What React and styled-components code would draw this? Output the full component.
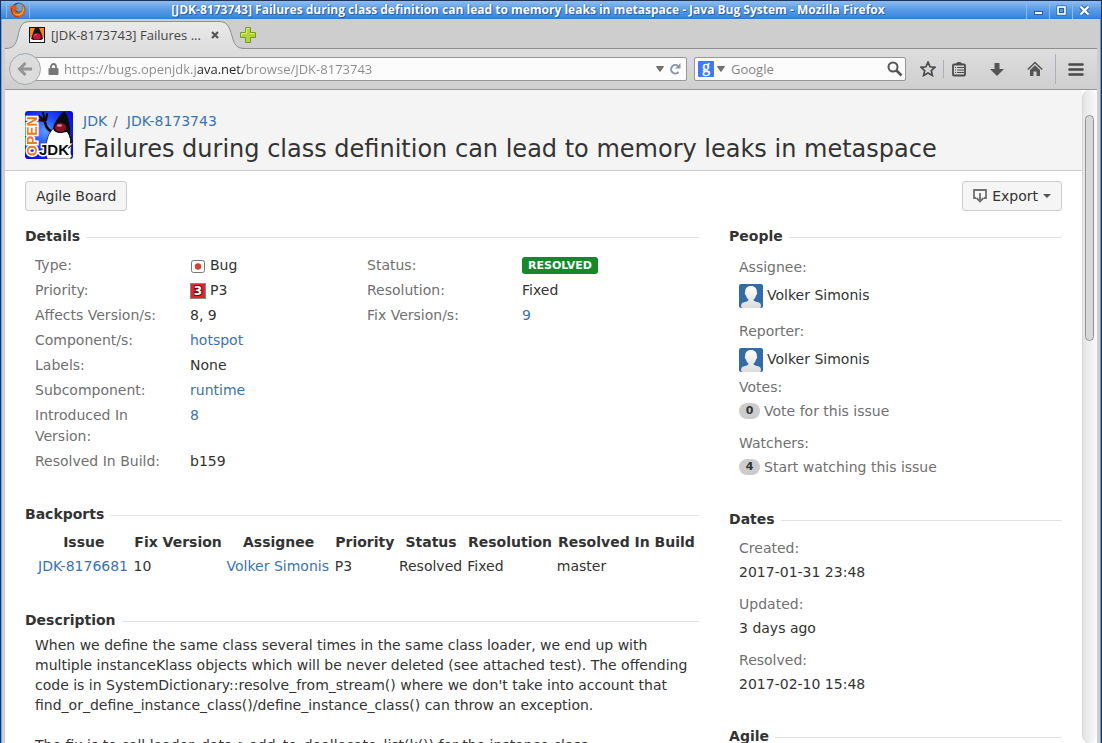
import React from "react";
import styled, { createGlobalStyle } from "styled-components";

const Global = createGlobalStyle`
  *, *::before, *::after { box-sizing: border-box; }
  body { margin: 0; background: #ffffff; }
  h1, h2, p, dl, dd, dt, ul { margin: 0; padding: 0; }
  button, input { font: inherit; }
`;

const chromeFont = `"Open Sans", "Noto Sans", sans-serif`;

const Window = styled.div`
  display: flex;
  flex-direction: column;
  height: 100vh;
  overflow: hidden;
  border-left: 1px solid #1b3358;
  border-right: 1px solid #1b3358;
  font-family: "DejaVu Sans", sans-serif;
  font-size: 14px;
  line-height: 20px;
  color: #333333;
`;

const TitleBar = styled.header`
  flex: none;
  display: flex;
  align-items: center;
  height: 19px;
  padding: 0 6px 0 5px;
  border-top: 1px solid #1b3358;
  background: linear-gradient(#8fbdf0, #5c9de8 45%, #3b88df 90%, #3478ca);
`;

const WindowTitle = styled.div`
  flex: 1;
  text-align: center;
  white-space: nowrap;
  overflow: hidden;
  font: bold 12px/18px ${chromeFont};
  color: #ffffff;
  text-shadow: 1px 1px 0 #2c5f9f, 0 0 1px #2c5f9f;
`;

const TitleIcon = styled.div`
  display: flex;
  padding: 0 3px;
  border-left: 1px solid #88b9ef;
  border-right: 1px solid #88b9ef;
`;

const TitleButton = styled.button`
  display: flex;
  align-items: center;
  justify-content: center;
  width: 23px;
  height: 18px;
  padding: 0;
  border: 0;
  border-left: 1px solid #88b9ef;
  background: none;
`;

const Frame = styled.div`
  flex: 1;
  min-height: 0;
  display: flex;
  flex-direction: column;
  border-left: 1px solid #6ba9ee;
  border-right: 1px solid #4f9af0;
  padding: 0 3px;
  background: #cecece;
`;

const TabStrip = styled.div`
  flex: none;
  display: flex;
  align-items: flex-end;
  height: 30px;
  border-bottom: 1px solid #8f8f8f;
`;

const Tab = styled.div`
  position: relative;
  display: flex;
  align-items: center;
  gap: 6px;
  width: 235px;
  height: 29px;
  margin-bottom: -1px;
  padding: 0 19px 0 24px;
  font: 13px/20px ${chromeFont};
  color: #444444;
  & > * { position: relative; }
`;

const TabShape = styled.svg`
  && { position: absolute; }
  left: 0;
  bottom: 0;
`;

const TabLabel = styled.span`
  flex: 1;
  white-space: nowrap;
`;

const IconButton = styled.button`
  display: flex;
  align-items: center;
  justify-content: center;
  flex: none;
  width: ${(p) => p.$w || 16}px;
  height: 16px;
  padding: 0;
  border: 0;
  background: none;
`;

const NewTab = styled(IconButton)`
  margin-bottom: 5px;
`;

const NavBar = styled.nav`
  flex: none;
  display: flex;
  align-items: center;
  height: 41px;
  padding: 0 13px 0 4px;
  border-bottom: 1px solid #969696;
  background: linear-gradient(#dedede, #cfcfcf);
  font: 13px/20px ${chromeFont};
`;

const BackButton = styled.button`
  position: relative;
  z-index: 1;
  display: flex;
  align-items: center;
  justify-content: center;
  flex: none;
  width: 32px;
  height: 32px;
  padding: 0;
  border: 1px solid #a3aab0;
  border-radius: 50%;
  background: #dcdcdc;
`;

const Field = styled.div`
  display: flex;
  align-items: center;
  gap: 3px;
  height: 24px;
  border: 1px solid #979797;
  border-radius: 2px;
  background: #fcfcfc;
`;

const UrlField = styled(Field)`
  flex: 1;
  min-width: 0;
  margin-left: -8px;
  padding: 0 3px 0 11px;
`;

const SearchField = styled(Field)`
  flex: none;
  width: 212px;
  margin-left: 7px;
  padding: 0 2px 0 3px;
`;

const UrlInput = styled.input`
  flex: 1;
  min-width: 0;
  height: 20px;
  padding: 0;
  border: 0;
  outline: 0;
  color: transparent;
  background: linear-gradient(to right, #8a8a8a 132px, #222222 132px, #222222 179px, #8a8a8a 179px);
  background-clip: text;
  -webkit-background-clip: text;
`;

const SearchInput = styled.input`
  flex: 1;
  min-width: 0;
  height: 20px;
  padding: 0 0 0 3px;
  border: 0;
  outline: 0;
  background: none;
  &::placeholder { color: #858585; opacity: 1; }
`;

const Tools = styled.div`
  display: flex;
  align-items: center;
  gap: 12px;
  margin-left: 14px;
`;

const BookmarkTools = styled.div`
  display: flex;
  align-items: center;
  gap: 7px;
`;

const Divider = styled.span`
  width: 1px;
  height: ${(p) => p.$h}px;
  background: #a8b0b8;
`;

const Viewport = styled.div`
  flex: 1;
  min-height: 0;
  display: flex;
  background: #ffffff;
`;

const Page = styled.main`
  flex: 1;
  min-width: 0;
  overflow: hidden;
`;

const ScrollTrack = styled.div`
  flex: none;
  width: 15px;
  padding: 25px 2px 0;
  border-left: 1px solid #d8d8d8;
  border-radius: 8px;
  background: linear-gradient(to right, #e4e4e4, #fafafa);
`;

const ScrollThumb = styled.div`
  width: 9px;
  height: 36%;
  border: 1px solid #949494;
  border-radius: 5px;
  background: #d8d8d8;
`;

const IssueHeader = styled.header`
  display: flex;
  gap: 10px;
  padding: 21px 20px 6px;
  border-bottom: 1px solid #cccccc;
  background: #f4f4f4;
`;

const Crumbs = styled.div`
  display: flex;
  gap: 6px;
  color: #707070;
`;

const Link = styled.a`
  color: #3b73af;
  text-decoration: none;
`;

const CrumbKey = styled(Link)`
  margin-left: 3px;
`;

const IssueTitle = styled.h1`
  font-size: 24px;
  font-weight: normal;
  line-height: 30px;
  padding-top: 3px;
  white-space: nowrap;
`;

const ActionBar = styled.div`
  display: flex;
  justify-content: space-between;
  padding: 10px 20px 15px;
`;

const ActionButton = styled.button`
  display: flex;
  align-items: center;
  gap: 5px;
  height: 30px;
  padding: 0 10px;
  border: 1px solid #cccccc;
  border-radius: 3px;
  background: #f5f5f5;
  color: #333333;
`;

const Columns = styled.div`
  display: grid;
  grid-template-columns: 65% minmax(0, 1fr);
  column-gap: 30px;
  padding: 0 20px;
`;

const Column = styled.div`
  display: flex;
  flex-direction: column;
  gap: ${(p) => p.$gap}px;
`;

const SectionTitle = styled.h2`
  display: flex;
  align-items: center;
  gap: 6px;
  font-size: 14px;
  font-weight: bold;
  line-height: 20px;
  &::after {
    content: "";
    flex: 1;
    height: 1px;
    margin-top: 2px;
    background: #e2e2e2;
  }
`;

const SectionBody = styled.div`
  padding: ${(p) => p.$top || 5}px 0 0 10px;
`;

const DetailGrid = styled.div`
  display: grid;
  grid-template-columns: 1fr 1fr;
  align-items: start;
  line-height: 21px;
`;

const DetailRow = styled.div`
  display: grid;
  grid-template-columns: 140px 1fr;
  column-gap: 15px;
  padding-bottom: 4px;
  &:last-child { padding-bottom: 1px; }
`;

const Term = styled.dt`
  color: #707070;
`;

const IconValue = styled.span`
  display: flex;
  align-items: center;
  gap: 4px;
`;

const Lozenge = styled.span`
  display: inline-block;
  padding: 0 6px;
  border-radius: 3px;
  background: #14892c;
  color: #ffffff;
  font-size: 11px;
  font-weight: bold;
  line-height: 17px;
  vertical-align: top;
  margin-top: 2px;
`;

const BackportTable = styled.table`
  border-spacing: 2px;
  width: 100%;
  white-space: nowrap;
  th, td { padding: 1px; }
  td { text-align: left; }
`;

const Paragraph = styled.p`
  margin-bottom: 20px;
`;

const Item = styled.div`
  margin-bottom: ${(p) => (p.$tight ? 4 : 12)}px;
  &:last-child { margin-bottom: 0; }
`;

const ItemValue = styled.dd`
  display: flex;
  align-items: center;
  gap: 4px;
  margin-top: 4px;
`;

const UserValue = styled(ItemValue)`
  align-items: flex-start;
  height: 28px;
  & > svg { margin-top: 3px; flex: none; }
  & > span { line-height: 28px; }
`;

const Badge = styled.span`
  width: 21px;
  border-radius: 8px;
  background: #cccccc;
  font-size: 11px;
  font-weight: bold;
  line-height: 16px;
  text-align: center;
`;

const MutedLink = styled(Link)`
  color: #707070;
`;

const FirefoxLogo = () => (
  <svg width="16" height="16" viewBox="0 0 16 16">
    <circle cx="8.5" cy="7.5" r="7" fill="#2a5b9c" />
    <circle cx="9.5" cy="5.5" r="4" fill="#5ea9d8" />
    <path d="M1 2.500 L2 4.500 C3 3 5 2.500 7 3.500 C5 4.500 6 5.500 8 6 C7 8 5 7.500 5.500 9 C7 11.500 11 11 12 8 C13 6 12 3 11 1 C15 3 16.500 8 14.500 11.500 C12 16.500 4.500 17 1.500 12 C0 9 0 6 1 2.500Z" fill="#dd5a17" />
    <path d="M13 4 C15 8 13.500 12 9.500 13.500 C5.500 14 3 12 2 9 C4 13 11 14 13 8Z" fill="#f6b63a" />
    <path d="M1.500 6 C.8 11 4 15 8.500 15" fill="none" stroke="#a8321a" strokeWidth="1" />
  </svg>
);

const DukeFavicon = () => (
  <svg width="16" height="16" viewBox="0 0 16 16">
    <rect width="16" height="16" fill="#111" />
    <rect x="1" y="1" width="14" height="14" fill="#ef8b22" />
    <path d="M1 11 L4 9 L12 9 L15 11 V15 H1Z" fill="#fff" />
    <path d="M6 1 H10 L13 8 L14 12 L12 13 H4.500 L2 12 L4 6Z" fill="#151515" />
    <ellipse cx="8" cy="9.500" rx="4" ry="3.300" fill="#cf1136" />
    <path d="M5.500 8.500 C6 7.500 7 7.500 8 7.500" stroke="#ec8095" fill="none" />
  </svg>
);

const ProjectAvatar = () => (
  <svg width="48" height="48" viewBox="0 0 48 48" role="img" aria-label="OpenJDK">
    <defs>
      <radialGradient id="sky" cx="42%" cy="42%" r="65%">
        <stop offset="0" stopColor="#5f9dff" />
        <stop offset=".45" stopColor="#1f4dfa" />
        <stop offset="1" stopColor="#0909dc" />
      </radialGradient>
      <clipPath id="avatarClip"><rect width="48" height="48" rx="3" /></clipPath>
    </defs>
    <g clipPath="url(#avatarClip)">
      <rect width="48" height="48" fill="url(#sky)" />
      <path d="M29 17 C24 21 22 27 21 35 L22 48 H46 V40 C47 32 45 25 43 20Z" fill="#fff" stroke="#111" strokeWidth=".7" />
      <path d="M45 25 C48 30 46 34 43 37" fill="none" stroke="#111" strokeWidth="2" />
      <path d="M38 1 C35 4 31 9 29 14 C27 19 29 21 34 22 L42 21 L45 26 C46 17 44 6 40 1Z" fill="#0b0b0b" />
      <ellipse cx="35.500" cy="16.500" rx="6" ry="5" fill="#8d1227" stroke="#0b0b0b" />
      <ellipse cx="34.500" cy="14.500" rx="2.600" ry="1.300" fill="#d98894" />
      <path d="M20 11 C21 16 23 19 26 20" fill="none" stroke="#0b0b0b" strokeWidth="2.600" />
      <path d="M20 10 L14 5 M20 9 L18 2 M21 9 L22 3 M19 10 L14 9" fill="none" stroke="#0b0b0b" strokeWidth="2.200" strokeLinecap="round" />
      <text x="12" y="45" transform="rotate(-90 12 45)" fontFamily="Liberation Sans" fontWeight="bold" fontSize="14" fill="#ee7a12" stroke="#fff" strokeWidth="3" paintOrder="stroke">OPEN</text>
      <text x="14" y="44" fontFamily="Liberation Sans" fontWeight="bold" fontSize="15" fill="#0c0c0c" stroke="#fff" strokeWidth="3" paintOrder="stroke">JDK</text>
    </g>
  </svg>
);

const UserAvatar = () => (
  <svg width="24" height="24" viewBox="0 0 24 24">
    <defs>
      <linearGradient id="person" x1="0" y1="0" x2="0" y2="1">
        <stop offset="0" stopColor="#ffffff" />
        <stop offset="1" stopColor="#dcdcdc" />
      </linearGradient>
    </defs>
    <rect width="24" height="24" rx="2" fill="#326ca6" />
    <path d="M12 2 C8 2 6 4.500 6.200 8 C5.500 8.500 5.800 11 7 11.500 C7.500 13.500 8.500 15 9.500 15.500 C9.500 17 8 17.500 5 18.200 C3 18.800 2 20 2 22 Q2 24 3.500 24 H20.500 Q22 24 22 22 C22 20 21 18.800 19 18.200 C16 17.500 14.500 17 14.500 15.500 C15.500 15 16.500 13.500 17 11.500 C18.200 11 18.500 8.500 17.800 8 C18 4.500 16 2 12 2Z" fill="url(#person)" />
  </svg>
);

const Caret = () => (
  <svg width="8" height="6" viewBox="0 0 8 6"><path d="M.5 .5 H7.500 L4 5.500Z" fill="#777" stroke="#555" strokeWidth=".8" /></svg>
);

const people = "Volker Simonis";

const leftDetails = [
  ["Type:", <IconValue>
    <svg width="16" height="16" viewBox="0 0 16 16"><rect x="1.500" y="2.500" width="13" height="12" rx="2" fill="#fff" stroke="#777" /><circle cx="8" cy="8.500" r="3.200" fill="#d04437" /></svg>Bug</IconValue>],
  ["Priority:", <IconValue>
    <svg width="16" height="16" viewBox="0 0 16 16"><rect x=".5" y=".5" width="15" height="15" fill="#e6232a" stroke="#888" /><text x="8" y="12" textAnchor="middle" fontFamily="DejaVu Sans" fontWeight="bold" fontSize="12" fill="#fff" stroke="#5b1010" strokeWidth="2" paintOrder="stroke">3</text></svg>P3</IconValue>],
  ["Affects Version/s:", "8, 9"],
  ["Component/s:", <Link href="#hotspot">hotspot</Link>],
  ["Labels:", "None"],
  ["Subcomponent:", <Link href="#runtime">runtime</Link>],
  ["Introduced In Version:", <Link href="#v8">8</Link>],
  ["Resolved In Build:", "b159"],
];

const rightDetails = [
  ["Status:", <Lozenge>RESOLVED</Lozenge>],
  ["Resolution:", "Fixed"],
  ["Fix Version/s:", <Link href="#v9">9</Link>],
];

const dates = [
  ["Created:", "2017-01-31 23:48"],
  ["Updated:", "3 days ago"],
  ["Resolved:", "2017-02-10 15:48"],
];

const DetailList = ({ rows }) => (
  <dl>
    {rows.map(([label, value]) => (
      <DetailRow key={label}><Term>{label}</Term><dd>{value}</dd></DetailRow>
    ))}
  </dl>
);

const BrowserChrome = () => (
  <>
    <TabStrip>
      <Tab>
        <TabShape width="240" height="29" viewBox="0 0 240 29">
          <defs><linearGradient id="tab" x1="0" y1="0" x2="0" y2="1"><stop offset="0" stopColor="#eaeaea" /><stop offset="1" stopColor="#dedede" /></linearGradient></defs>
          <path d="M0 28.500 C9 28.500 11 24 13 16 C15 6 17 1.500 25 1.500 H214 C222 1.500 224 6 227 16 C229 24 231 28.500 240 28.500 V29 H0Z" fill="url(#tab)" />
          <path d="M0 28.500 C9 28.500 11 24 13 16 C15 6 17 1.500 25 1.500 H214 C222 1.500 224 6 227 16 C229 24 231 28.500 240 28.500" fill="none" stroke="#8f8f8f" />
        </TabShape>
        <DukeFavicon />
        <TabLabel>[JDK-8173743] Failures ...</TabLabel>
        <IconButton aria-label="Close tab" $w={12}>
          <svg width="8" height="8" viewBox="0 0 8 8"><path d="M1 1 L7 7 M7 1 L1 7" stroke="#555" strokeWidth="2.200" /></svg>
        </IconButton>
      </Tab>
      <NewTab aria-label="New tab">
        <svg width="16" height="16" viewBox="0 0 16 16"><path d="M5.500 .5 H10.500 V5.500 H15.500 V10.500 H10.500 V15.500 H5.500 V10.500 H.5 V5.500 H5.500Z" fill="#b4d235" stroke="#769a24" /><path d="M6.500 6.500 V1.500 H9.500 M1.500 9 V6.500 H6.500 M10 6.500 H14.500" fill="none" stroke="#dcea93" /></svg>
      </NewTab>
    </TabStrip>
    <NavBar>
      <BackButton aria-label="Back">
        <svg width="16" height="16" viewBox="0 0 16 16"><path d="M8.500 2 L2.500 8 L8.500 14 M3 8 H15" fill="none" stroke="#949494" strokeWidth="3" /></svg>
      </BackButton>
      <UrlField>
        <svg width="16" height="12" viewBox="0 0 16 12"><path d="M6 6 V4 A2.500 3 0 0 1 11 4 V6" fill="none" stroke="#777" strokeWidth="1.800" /><rect x="3.500" y="5" width="10" height="7" rx="1" fill="#777" /></svg>
        <UrlInput aria-label="Address" defaultValue="https://bugs.openjdk.java.net/browse/JDK-8173743" />
        <Caret />
        <IconButton aria-label="Reload">
          <svg width="12" height="12" viewBox="0 0 12 12"><path d="M9 3 A4.200 4.200 0 1 0 9.500 9" fill="none" stroke="#8b97a5" strokeWidth="2" /><path d="M11.500 0 V5.500 H6Z" fill="#8b97a5" /></svg>
        </IconButton>
      </UrlField>
      <SearchField>
        <svg width="16" height="16" viewBox="0 0 16 16"><rect width="16" height="16" rx="1" fill="#4178f5" /><text x="8" y="11" textAnchor="middle" fontFamily="Liberation Serif" fontSize="16" fill="#fff" stroke="#fff" strokeWidth=".4">g</text></svg>
        <Caret />
        <SearchInput aria-label="Search" placeholder="Google" />
        <IconButton aria-label="Start search">
          <svg width="16" height="16" viewBox="0 0 16 16"><circle cx="6" cy="6" r="4.500" fill="none" stroke="#555" strokeWidth="2" /><path d="M9 9 L14.500 14.500" stroke="#555" strokeWidth="2.600" /></svg>
        </IconButton>
      </SearchField>
      <Tools>
        <BookmarkTools>
          <IconButton aria-label="Bookmark">
            <svg width="16" height="16" viewBox="0 0 16 16"><path d="M8 1.200 L10.100 5.800 L15 6.300 L11.300 9.600 L12.400 14.500 L8 12 L3.600 14.500 L4.700 9.600 L1 6.300 L5.900 5.800Z" fill="none" stroke="#4c4c4c" strokeWidth="1.700" /></svg>
          </IconButton>
          <Divider $h={18} />
          <IconButton aria-label="Bookmarks list">
            <svg width="14" height="16" viewBox="0 0 14 16"><rect x="1" y="3.500" width="12" height="11" rx="1" fill="none" stroke="#4c4c4c" strokeWidth="1.800" /><path d="M4 3 Q4 1 7 1 Q10 1 10 3Z" fill="#4c4c4c" /><path d="M3 6.500 H4 M5 6.500 H12 M3 9 H4 M5 9 H12 M3 11.500 H4 M5 11.500 H12" stroke="#4c4c4c" /></svg>
          </IconButton>
        </BookmarkTools>
        <IconButton aria-label="Downloads" $w={36}>
          <svg width="14" height="15" viewBox="0 0 14 15"><path d="M4.500 1 H9.500 V7 H14 L7 14 L0 7 H4.500Z" fill="#565656" /></svg>
        </IconButton>
        <IconButton aria-label="Home">
          <svg width="16" height="16" viewBox="0 0 16 16"><path d="M.8 8.500 L8 1.500 L15.200 8.500" fill="none" stroke="#555" strokeWidth="1.600" /><path d="M3 9 L8 4.200 L13 9 V15 H9.500 V10.500 H6.500 V15 H3Z" fill="#555" /></svg>
        </IconButton>
        <Divider $h={30} />
        <IconButton aria-label="Menu">
          <svg width="16" height="13" viewBox="0 0 16 13"><path d="M1.500 1.500 H14.500 M1.500 6.500 H14.500 M1.500 11.500 H14.500" stroke="#484848" strokeWidth="2.600" strokeLinecap="round" /></svg>
        </IconButton>
      </Tools>
    </NavBar>
  </>
);

export default function App() {
  return (
    <Window>
      <Global />
      <TitleBar>
        <TitleIcon><FirefoxLogo /></TitleIcon>
        <WindowTitle>[JDK-8173743] Failures during class definition can lead to memory leaks in metaspace - Java Bug System - Mozilla Firefox</WindowTitle>
        <TitleButton aria-label="Minimize"><svg width="9" height="10" viewBox="0 0 9 10"><rect x=".5" y="6.500" width="8" height="3" fill="#fff" stroke="#2c5f9f" /></svg></TitleButton>
        <TitleButton aria-label="Maximize"><svg width="11" height="11" viewBox="0 0 11 11"><rect x=".5" y=".5" width="10" height="10" fill="#2c5f9f" /><rect x="2" y="2" width="7" height="7" fill="#5398e6" stroke="#fff" strokeWidth="1.600" /><rect x="3.500" y="3.500" width="4" height="4" fill="#5398e6" stroke="#2c5f9f" /></svg></TitleButton>
        <TitleButton aria-label="Close"><svg width="11" height="11" viewBox="0 0 11 11"><path d="M1.500 1.500 L9.500 9.500 M9.500 1.500 L1.500 9.500" stroke="#2c5f9f" strokeWidth="4" /><path d="M1.500 1.500 L9.500 9.500 M9.500 1.500 L1.500 9.500" stroke="#fff" strokeWidth="2.400" /></svg></TitleButton>
      </TitleBar>
      <Frame>
        <BrowserChrome />
        <Viewport>
          <Page>
            <IssueHeader>
              <ProjectAvatar />
              <div>
                <Crumbs><Link href="#jdk">JDK</Link><span>/</span><CrumbKey href="#issue">JDK-8173743</CrumbKey></Crumbs>
                <IssueTitle>Failures during class definition can lead to memory leaks in metaspace</IssueTitle>
              </div>
            </IssueHeader>
            <ActionBar>
              <ActionButton>Agile Board</ActionButton>
              <ActionButton>
                <svg width="14" height="14" viewBox="0 0 14 14"><path d="M3 9 H1 V1 H13 V9 H11 M7 4 V12 M3.500 9 L7 12.500 L10.500 9" fill="none" stroke="#707070" strokeWidth="1.800" /></svg>
                Export
                <svg width="8" height="4" viewBox="0 0 8 4"><path d="M0 0 H8 L4 4Z" fill="#555" /></svg>
              </ActionButton>
            </ActionBar>
            <Columns>
              <Column $gap={31}>
                <section>
                  <SectionTitle>Details</SectionTitle>
                  <SectionBody $top={9}>
                    <DetailGrid>
                      <DetailList rows={leftDetails} />
                      <DetailList rows={rightDetails} />
                    </DetailGrid>
                  </SectionBody>
                </section>
                <section>
                  <SectionTitle>Backports</SectionTitle>
                  <SectionBody>
                    <BackportTable>
                      <thead>
                        <tr><th>Issue</th><th>Fix Version</th><th>Assignee</th><th>Priority</th><th>Status</th><th>Resolution</th><th>Resolved In Build</th></tr>
                      </thead>
                      <tbody>
                        <tr>
                          <td><Link href="#JDK-8176681">JDK-8176681</Link></td>
                          <td>10</td>
                          <td><Link href="#volker">{people}</Link></td>
                          <td>P3</td><td>Resolved</td><td>Fixed</td><td>master</td>
                        </tr>
                      </tbody>
                    </BackportTable>
                  </SectionBody>
                </section>
                <section>
                  <SectionTitle>Description</SectionTitle>
                  <SectionBody>
                    <Paragraph>When we define the same class several times in the same class loader, we end up with multiple instanceKlass objects which will be never deleted (see attached test). The offending code is in SystemDictionary::resolve_from_stream() where we don't take into account that find_or_define_instance_class()/define_instance_class() can throw an exception.</Paragraph>
                    <Paragraph>The fix is to call loader_data-&gt;add_to_deallocate_list(k()) for the instance class</Paragraph>
                  </SectionBody>
                </section>
              </Column>
              <Column $gap={32}>
                <section>
                  <SectionTitle>People</SectionTitle>
                  <SectionBody $top={11}>
                    <dl>
                      <Item><Term>Assignee:</Term><UserValue><UserAvatar /><span>{people}</span></UserValue></Item>
                      <Item $tight><Term>Reporter:</Term><UserValue><UserAvatar /><span>{people}</span></UserValue></Item>
                      <Item><Term>Votes:</Term><ItemValue><Badge>0</Badge><MutedLink href="#vote">Vote for this issue</MutedLink></ItemValue></Item>
                      <Item><Term>Watchers:</Term><ItemValue><Badge>4</Badge><MutedLink href="#watch">Start watching this issue</MutedLink></ItemValue></Item>
                    </dl>
                  </SectionBody>
                </section>
                <section>
                  <SectionTitle>Dates</SectionTitle>
                  <SectionBody $top={9}>
                    <dl>
                      {dates.map(([label, value]) => (
                        <Item key={label}><Term>{label}</Term><ItemValue>{value}</ItemValue></Item>
                      ))}
                    </dl>
                  </SectionBody>
                </section>
                <section>
                  <SectionTitle>Agile</SectionTitle>
                </section>
              </Column>
            </Columns>
          </Page>
          <ScrollTrack><ScrollThumb /></ScrollTrack>
        </Viewport>
      </Frame>
    </Window>
  );
}
